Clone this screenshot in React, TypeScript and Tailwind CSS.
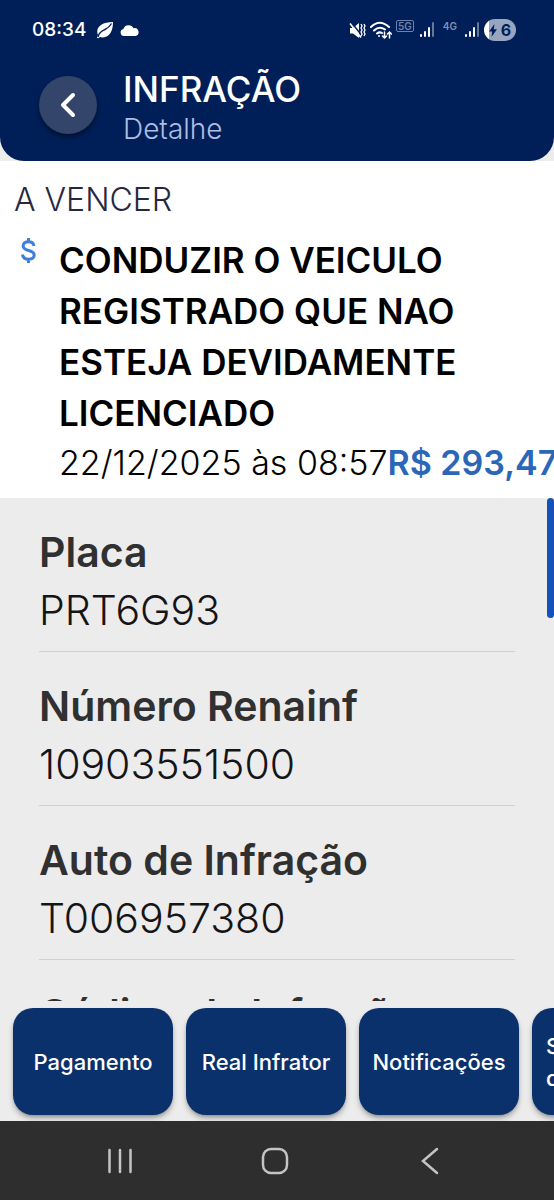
import { clsx } from "clsx";

const fields = [
  { label: "Placa", value: "PRT6G93" },
  { label: "Número Renainf", value: "10903551500" },
  { label: "Auto de Infração", value: "T006957380" },
  { label: "Código da Infração", value: "65992" },
];

const actions = ["Pagamento", "Real Infrator", "Notificações", "Solicitação de Recurso"];

function Signal() {
  return (
    <svg width="15" height="16" viewBox="0 0 15 16" fill="white">
      <rect x="0" y="12" width="2" height="3" rx="1" />
      <rect x="4" y="9" width="2" height="6" rx="1" />
      <rect x="8" y="5" width="2" height="10" rx="1" />
      <rect x="12" y="0" width="2" height="15" rx="1" opacity="0.4" />
    </svg>
  );
}

function StatusBar() {
  return (
    <div className="flex h-[60px] items-center pr-[38px] pl-8 text-white">
      <span className="text-[19px] leading-6 font-medium">08:34</span>

      <svg className="ml-2.5" width="18" height="18" viewBox="0 0 18 18">
        <path d="M2 14C-1 7 5 1 17 1C17 12 12 18 4 16C2.500 17.500 1.500 17.500 1 16.500Z" fill="white" />
        <path d="M2 16C3 11 6 10 9 8.500C12 7 14 5 15.500 2.500" fill="none" stroke="#001f58" strokeWidth="1.4" />
      </svg>
      <svg className="ml-1.5" width="19" height="11" viewBox="0 0 19 11" fill="white">
        <path d="M4 11a3.600 3.600 0 0 1-.6-7.100A5.500 5.500 0 0 1 13.500 3.200 4 4 0 0 1 15.500 11Z" />
      </svg>

      <div className="ml-auto flex items-center">
        <svg width="17" height="17" viewBox="0 0 17 17" fill="none" stroke="white">
          <path d="M1 6h3L10 1v15L4 11.500H1Z" fill="white" stroke="none" />
          <path d="M2 0l12 15" stroke="#001f58" strokeWidth="1.5" />
          <path d="M1 1.500l11 14" strokeWidth="1.6" />
          <path d="M12 2l1 2-1 2 1 2-1 2 1 2-1 2M15 2l1 2-1 2 1 2-1 2 1 2-1 2" strokeWidth="1.3" />
        </svg>
        <svg className="ml-1" width="22" height="18" viewBox="0 0 22 18" fill="none" stroke="white" strokeWidth="2" strokeLinecap="round">
          <path d="M1 6Q9.500-2.500 19 6M4 9.500Q9.500 4.500 15 8.500M7 12.500Q9.500 10.500 12 12" />
          <circle cx="9" cy="15" r="1" fill="white" stroke="none" />
          <path d="M14.500 11v6m-2-2l2 2 2-2M19.500 17v-6m-2 2l2-2 2 2" strokeWidth="1.5" />
        </svg>
        <span className="mb-2 ml-1 rounded-xs border border-[#6f83aa] px-px text-[10px] leading-[10px] font-semibold text-[#6f83aa]">
          5G
        </span>
        <span className="ml-1.5">
          <Signal />
        </span>
        <span className="mb-2 ml-2 text-[10px] leading-[10px] font-semibold text-[#8092b5]">4G</span>
        <span className="ml-2">
          <Signal />
        </span>
        <div className="ml-1 flex h-[22px] w-8 items-center justify-center gap-1 overflow-hidden rounded-full bg-linear-to-r from-white from-15% to-[#98a5c0] to-15% text-[#001f58]">
          <svg width="8" height="13" viewBox="0 0 8 13" fill="currentColor">
            <path d="M5.500 0L0 7.500h3.200L2.500 13L8 5.200H4.800Z" />
          </svg>
          <span className="text-[16px] leading-5 font-bold">6</span>
        </div>
      </div>
    </div>
  );
}

function Header() {
  return (
    <div className="bg-[#ececec]">
      <header className="rounded-b-3xl bg-[#001f58] pb-[18px]">
        <StatusBar />
        <div className="flex items-center gap-[26px] pt-0.5 pl-[39px]">
          <button
            type="button"
            aria-label="Voltar"
            className="mt-1 flex size-[58px] items-center justify-center rounded-full bg-[#34456b] shadow-md shadow-black/40"
          >
            <svg width="16" height="26" viewBox="0 0 16 26" fill="none" stroke="white" strokeWidth="4" strokeLinecap="round" strokeLinejoin="round">
              <path d="M13 3L3 13l10 10" />
            </svg>
          </button>
          <div>
            <h1 className="text-[35px] leading-[54px] font-medium text-white">INFRAÇÃO</h1>
            <p className="text-[28px] leading-[27px] font-light text-[#aebde0]">Detalhe</p>
          </div>
        </div>
      </header>
    </div>
  );
}

function Summary() {
  return (
    <section className="overflow-hidden bg-white pt-3.5 pb-3">
      <p className="pl-3.5 text-[32px] leading-[50px] font-light text-[#26283f]">A VENCER</p>
      <div className="flex pt-2.5">
        <div className="w-[59px] shrink-0 pt-[3px] pl-[21px]">
          <svg width="15" height="26" viewBox="0 0 15 26" fill="none" stroke="#3f7fdc" strokeWidth="3">
            <path d="M7.500 0v4M7.500 21v4M13 8C12.500 5 10.500 3.800 7.500 3.800C4.300 3.800 2.200 5.300 2.200 8C2.200 14 13.200 11 13.200 17C13.200 19.800 10.800 21.200 7.600 21.200C4 21.200 1.800 19.500 1.500 16.500" />
          </svg>
        </div>
        <div className="min-w-0">
          <h2 className="pr-20 text-[35px] leading-[51px] font-semibold text-black">
            CONDUZIR O VEICULO REGISTRADO QUE NAO ESTEJA DEVIDAMENTE LICENCIADO
          </h2>
          <p className="text-[34px] leading-[47px] font-light whitespace-nowrap text-black">
            22/12/2025 às 08:57<strong className="font-semibold text-[#2b67b9]">R$ 293,47</strong>
          </p>
        </div>
      </div>
    </section>
  );
}

function Details() {
  return (
    <section className="relative min-h-0 flex-1 overflow-hidden px-[39px]">
      <dl>
        {fields.map((field) => (
          <div key={field.label} className="border-b border-[#d0d0d0] pt-[25px] pb-3">
            <dt className="text-[41px] leading-[58px] font-semibold text-[#303030]">{field.label}</dt>
            <dd className="text-[41px] leading-[58px] font-light text-[#151518]">{field.value}</dd>
          </div>
        ))}
      </dl>
      <div className="absolute top-0 right-0 h-[120px] w-[7px] rounded-full bg-[#1451b8]" />
    </section>
  );
}

function Actions() {
  return (
    <div className="flex gap-[13px] overflow-hidden px-[13px] pt-[7px] pb-1.5">
      {actions.map((action, index) => (
        <button
          key={action}
          type="button"
          className={clsx(
            "flex h-[107px] w-40 shrink-0 items-center rounded-[20px] bg-[#0b316d] text-[22px] leading-[32px] font-medium text-white shadow-md shadow-black/30",
            index === 3 ? "justify-start pl-3.5 text-left" : "justify-center",
          )}
        >
          {action}
        </button>
      ))}
    </div>
  );
}

function NavigationBar() {
  return (
    <nav className="flex h-[79px] shrink-0 items-center justify-between bg-[#2e2e2e] pr-[110px] pl-[106px]">
      <button type="button" aria-label="Recentes">
        <svg width="28" height="28" viewBox="0 0 28 28" stroke="#c4c4c4" strokeWidth="2.500" strokeLinecap="round">
          <path d="M3.500 3v22M14 3v22M24.500 3v22" />
        </svg>
      </button>
      <button type="button" aria-label="Início">
        <svg width="28" height="28" viewBox="0 0 28 28" fill="none" stroke="#c4c4c4" strokeWidth="2.500">
          <rect x="2" y="2" width="24" height="24" rx="8" />
        </svg>
      </button>
      <button type="button" aria-label="Voltar">
        <svg width="28" height="28" viewBox="0 0 28 28" fill="none" stroke="#c4c4c4" strokeWidth="2.500" strokeLinecap="round">
          <path d="M21 2L7 14l14 12" />
        </svg>
      </button>
    </nav>
  );
}

export default function App() {
  return (
    <div className="flex h-screen flex-col overflow-hidden bg-[#ececec] font-[Inter,sans-serif]">
      <Header />
      <Summary />
      <Details />
      <Actions />
      <NavigationBar />
    </div>
  );
}
